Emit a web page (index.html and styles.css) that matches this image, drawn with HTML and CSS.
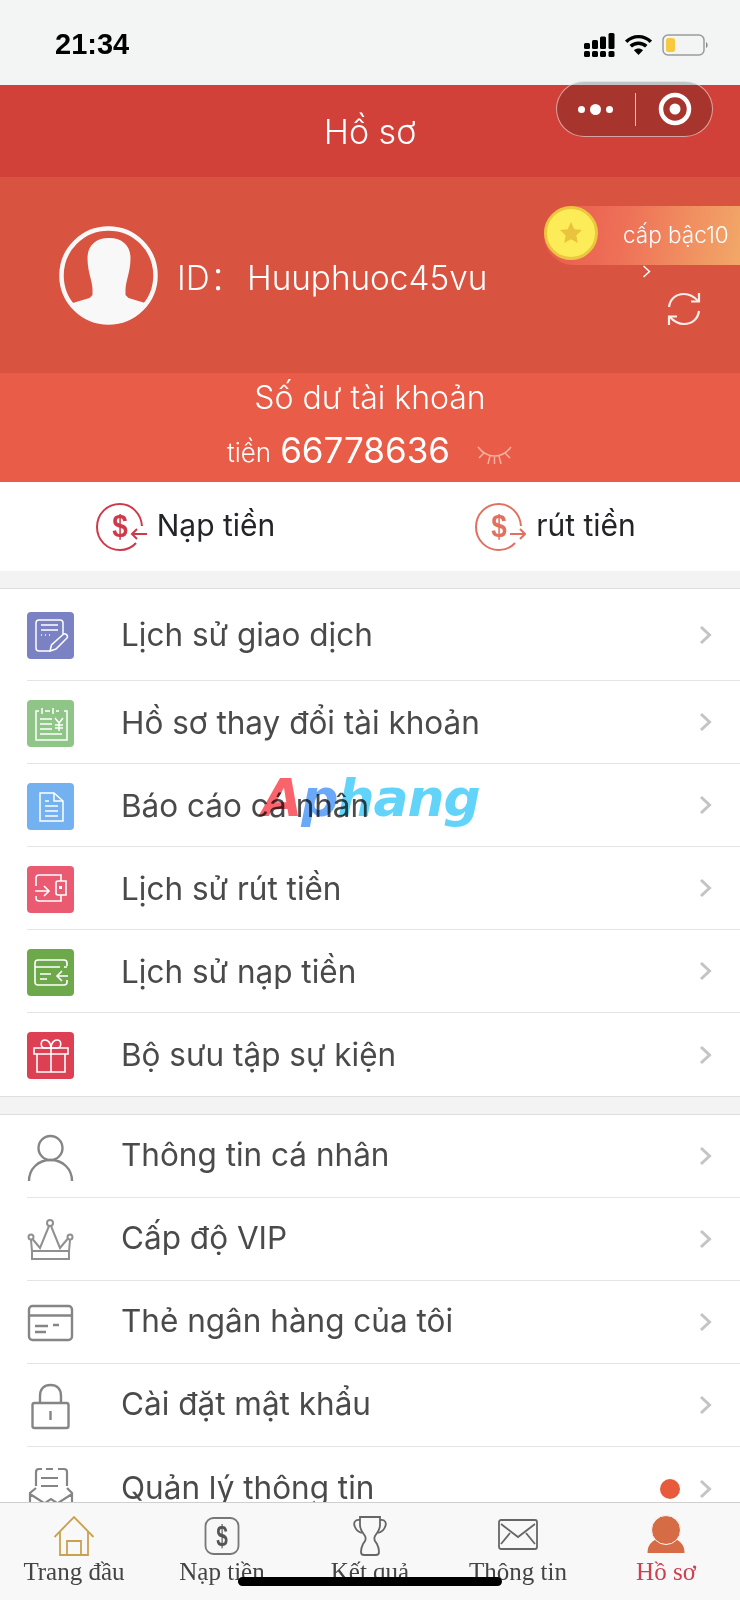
FILE: index.html
```html
<!DOCTYPE html>
<html lang="vi">
<head>
  <meta charset="UTF-8">
  <meta name="viewport" content="width=device-width, initial-scale=1.0">
  <title>Hồ sơ</title>
  <link rel="stylesheet" href="styles.css">
</head>
<body>
  <div class="statusbar">
    <span class="time">21:34</span>
    <div class="status-icons">
      <svg width="31" height="24" viewBox="0 0 31 24" fill="#000">
        <rect x="0" y="10" width="6" height="6" rx="1.500"/><rect x="0" y="18" width="6" height="6" rx="1.500"/>
        <rect x="8" y="7" width="6" height="9" rx="1.500"/><rect x="8" y="18" width="6" height="6" rx="1.500"/>
        <rect x="16" y="3.500" width="6" height="12.500" rx="1.500"/><rect x="16" y="18" width="6" height="6" rx="1.500"/>
        <rect x="24.500" y="0" width="6" height="16" rx="1.500"/><rect x="24.500" y="18" width="6" height="6" rx="1.500"/>
      </svg>
      <svg width="29" height="21" viewBox="0 0 30 23" fill="none" stroke="#000" stroke-width="3.800">
        <path d="M1.500 8.500C9 1 21 1 28.500 8.500"/>
        <path d="M6.500 13.500C11 9 19 9 23.500 13.500"/>
        <path d="M15 23l-5-5.200c2.800-2.400 7.200-2.400 10 0z" fill="#000" stroke="none"/>
      </svg>
      <svg class="battery" width="47" height="24" viewBox="0 0 47 24" fill="none">
        <rect x="1" y="2" width="41" height="20" rx="5" stroke="#9a9a9a" stroke-width="1.500"/>
        <rect x="4" y="5" width="9" height="14" rx="2.500" fill="#f7c93e"/>
        <path d="M44 9c2 .8 2.400 5.200 0 6z" fill="#8a8a8a"/>
      </svg>
    </div>
  </div>

  <div class="titlebar">Hồ sơ</div>

  <div class="capsule">
    <div class="capsule-dots"><i></i><i class="big"></i><i></i></div>
    <div class="capsule-line"></div>
    <svg width="34" height="34" viewBox="0 0 34 34" fill="none">
      <circle cx="17" cy="17" r="14" stroke="#fff" stroke-width="4.500"/>
      <circle cx="17" cy="17" r="5.500" fill="#fff"/>
    </svg>
  </div>

  <div class="profile">
    <svg class="avatar" width="99" height="99" viewBox="0 0 99 99" fill="none">
      <defs><clipPath id="avatar-clip"><circle cx="49.500" cy="49.500" r="47"/></clipPath></defs>
      <g clip-path="url(#avatar-clip)" fill="#f8f8f8">
        <path d="M49.500 12c-13 0-21 8-21 20 0 8 1.500 14 3 20 1 4 2 8 2 12v5l-3 3-30 9v20h99V81l-30-9-3-3v-5c0-4 1-8 2-12 1.500-6 3-12 3-20 0-12-8-20-21-20z"/>
      </g>
      <circle cx="49.500" cy="49.500" r="47" stroke="#f8f8f8" stroke-width="4.500"/>
    </svg>
    <div class="user-id"><span class="user-id-label">ID：</span><span>Huuphuoc45vu</span></div>

    <div class="level">
      <div class="coin">
        <svg width="24" height="24" viewBox="0 0 24 24"><path d="M12 1l3.300 7.200 7.700.9-5.700 5.300 1.500 7.700L12 18.300l-6.800 3.800 1.500-7.700L1 9.100l7.700-.9z" fill="#e9c33d"/></svg>
      </div>
      <span class="level-text">cấp bậc10</span>
    </div>
    <svg class="level-arrow" width="9" height="13" viewBox="0 0 9 13" fill="none" stroke="#fff" stroke-width="1.500"><path d="M1.500 1l6 5.500-6 5.500"/></svg>
    <svg class="refresh" width="36" height="36" viewBox="0 0 36 36" fill="none" stroke="#fbeeea" stroke-width="2.200">
      <path d="M3 16C4 8 10 3 18 3c6 0 10 2.500 14 7"/><path d="M33 2v8.500h-8"/>
      <path d="M33 20c-1 8-7 13-15 13-6 0-10-2.500-14-7"/><path d="M3 34v-8.500h8"/>
    </svg>
  </div>

  <div class="balance">
    <div class="balance-label">Số dư tài khoản</div>
    <div class="balance-amount">
      <span class="currency">tiền</span>
      <span class="amount">66778636</span>
      <svg class="eye" width="37" height="26" viewBox="0 0 37 26" fill="none" stroke="#f4b0a3" stroke-width="1.500">
        <path d="M2 6c9 12 24 12 33 0"/><path d="M8 12l-5 5M14 15l-2 8M23 15l2 8M29 12l5 5M18.500 16v7"/>
      </svg>
    </div>
  </div>

  <div class="actions">
    <div class="action">
      <svg width="52" height="50" viewBox="0 0 52 50" fill="none" stroke="#cf3a4a" stroke-width="2">
        <path d="M47 24C46 11 36 2 25 2 12 2 2 12 2 25s10 23 23 23c7 0 12-2.500 16-7"/>
        <path d="M52 32H37M42 27l-5 5 5 5"/>
        <text class="dollar" transform="translate(25 35) scale(.9 1)" text-anchor="middle" font-size="31" fill="#cf3a4a" stroke="none">$</text>
      </svg>
      <span>Nạp tiền</span>
    </div>
    <div class="action">
      <svg width="52" height="50" viewBox="0 0 52 50" fill="none" stroke="#e2705f" stroke-width="2">
        <path d="M47 24C46 11 36 2 25 2 12 2 2 12 2 25s10 23 23 23c7 0 12-2.500 16-7"/>
        <path d="M36 32h15M46 27l5 5-5 5"/>
        <text class="dollar" transform="translate(25 35) scale(.9 1)" text-anchor="middle" font-size="31" fill="#e2705f" stroke="none">$</text>
      </svg>
      <span>rút tiền</span>
    </div>
  </div>

  <div class="menu">
    <div class="group">
      <div class="row row-tall">
        <svg class="tile" width="47" height="47" viewBox="0 0 47 47" fill="none" stroke="#fff" stroke-width="1.500">
          <rect width="47" height="47" rx="4" fill="#7a82c4" stroke="none"/>
          <path d="M23 39H12a3 3 0 0 1-3-3V11a3 3 0 0 1 3-3h21a3 3 0 0 1 3 3v11"/>
          <path d="M14 13h17M14 18h17M14 23h1M18 23h1M22 23h1"/>
          <path d="M23 39l1.500-6L36 22.500c1.500-1.300 5-.5 4.500 3L29 37z"/>
        </svg>
        <span class="row-text">Lịch sử giao dịch</span>
        <svg class="chevron" width="13" height="20" viewBox="0 0 13 20" fill="none" stroke="#c4c4c4" stroke-width="3"><path d="M2 2l8.500 8L2 18"/></svg>
      </div>
      <div class="row">
        <svg class="tile" width="47" height="47" viewBox="0 0 47 47" fill="none" stroke="#fff" stroke-width="1.500">
          <rect width="47" height="47" rx="4" fill="#8fc587" stroke="none"/>
          <path d="M12 11H9v29h31V11h-3M18 11h5M29 11h3M15 8v6M26 8v6"/>
          <path d="M13 19h12M13 24h12M13 29h12M13 34h22"/>
          <path d="M28 18l4 5 4-5M32 23v8M28 25h8M28 28h8"/>
        </svg>
        <span class="row-text">Hồ sơ thay đổi tài khoản</span>
        <svg class="chevron" width="13" height="20" viewBox="0 0 13 20" fill="none" stroke="#c4c4c4" stroke-width="3"><path d="M2 2l8.500 8L2 18"/></svg>
      </div>
      <div class="row">
        <svg class="tile" width="47" height="47" viewBox="0 0 47 47" fill="none" stroke="#fff" stroke-width="1.500">
          <rect width="47" height="47" rx="4" fill="#74b1f1" stroke="none"/>
          <path d="M27 10H13v28h23V18z"/><path d="M27 10v8h9"/>
          <path d="M18 18h4M18 23h13M18 28h13M18 33h13"/>
        </svg>
        <span class="row-text">Báo cáo cá nhân</span>
        <svg class="chevron" width="13" height="20" viewBox="0 0 13 20" fill="none" stroke="#c4c4c4" stroke-width="3"><path d="M2 2l8.500 8L2 18"/></svg>
      </div>
      <div class="row">
        <svg class="tile" width="47" height="47" viewBox="0 0 47 47" fill="none" stroke="#fff" stroke-width="1.600">
          <rect width="47" height="47" rx="4" fill="#ea5b72" stroke="none"/>
          <path d="M9 20v-8a3 3 0 0 1 3-3h22v26H12a3 3 0 0 1-3-3v-2"/>
          <path d="M39 15H31a2 2 0 0 0-2 2v10a2 2 0 0 0 2 2h8z" fill="#ea5b72"/>
          <rect x="32" y="20" width="3" height="3" fill="#fff" stroke="none"/>
          <path d="M8 25h14M17 20l5 5-5 5"/>
        </svg>
        <span class="row-text">Lịch sử rút tiền</span>
        <svg class="chevron" width="13" height="20" viewBox="0 0 13 20" fill="none" stroke="#c4c4c4" stroke-width="3"><path d="M2 2l8.500 8L2 18"/></svg>
      </div>
      <div class="row">
        <svg class="tile" width="47" height="47" viewBox="0 0 47 47" fill="none" stroke="#fff" stroke-width="1.600">
          <rect width="47" height="47" rx="4" fill="#6da94a" stroke="none"/>
          <path d="M40 17v-3a3 3 0 0 0-3-3H11a3 3 0 0 0-3 3v19a3 3 0 0 0 3 3h26a3 3 0 0 0 3-3v-2"/>
          <path d="M8 18h25M37 18h3M13 25h11M13 30h7"/>
          <path d="M41 27H30M35 22l-5 5 5 5"/>
        </svg>
        <span class="row-text">Lịch sử nạp tiền</span>
        <svg class="chevron" width="13" height="20" viewBox="0 0 13 20" fill="none" stroke="#c4c4c4" stroke-width="3"><path d="M2 2l8.500 8L2 18"/></svg>
      </div>
      <div class="row row-last">
        <svg class="tile" width="47" height="47" viewBox="0 0 47 47" fill="none" stroke="#fff" stroke-width="1.600">
          <rect width="47" height="47" rx="4" fill="#dd4052" stroke="none"/>
          <path d="M7 16h34v6H7zM10 22v18h28V22M24 16v24"/>
          <path d="M24 16h-6c-5 0-5-8 0-8 3 0 6 3 6 8zM24 16h6c5 0 5-8 0-8-3 0-6 3-6 8z"/>
        </svg>
        <span class="row-text">Bộ sưu tập sự kiện</span>
        <svg class="chevron" width="13" height="20" viewBox="0 0 13 20" fill="none" stroke="#c4c4c4" stroke-width="3"><path d="M2 2l8.500 8L2 18"/></svg>
      </div>
    </div>

    <div class="group group-plain">
      <div class="row">
        <svg class="tile" width="47" height="47" viewBox="0 0 47 47" fill="none" stroke="#858585" stroke-width="2.400">
          <circle cx="23.500" cy="14" r="12"/>
          <path d="M2 47c0-12 9-21 21.500-21S45 35 45 47"/>
        </svg>
        <span class="row-text">Thông tin cá nhân</span>
        <svg class="chevron" width="13" height="20" viewBox="0 0 13 20" fill="none" stroke="#c4c4c4" stroke-width="3"><path d="M2 2l8.500 8L2 18"/></svg>
      </div>
      <div class="row">
        <svg class="tile" width="47" height="47" viewBox="0 0 47 47" fill="none" stroke="#909090" stroke-width="2">
          <circle cx="23" cy="6" r="3"/><circle cx="4" cy="20" r="2.500"/><circle cx="43" cy="20" r="2.500"/>
          <path d="M22 9L13 31 5.500 22M24 9l9 22 7.500-9"/>
          <path d="M4 23l1 11h37l1-11M5 34v8h37v-8"/>
        </svg>
        <span class="row-text">Cấp độ VIP</span>
        <svg class="chevron" width="13" height="20" viewBox="0 0 13 20" fill="none" stroke="#c4c4c4" stroke-width="3"><path d="M2 2l8.500 8L2 18"/></svg>
      </div>
      <div class="row">
        <svg class="tile" width="47" height="47" viewBox="0 0 47 47" fill="none" stroke="#858585" stroke-width="2.400">
          <rect x="2" y="6" width="43" height="34" rx="3.500"/>
          <path d="M2 15.500h43"/>
          <path d="M8 26h13M8 32h11M26 25h6"/>
        </svg>
        <span class="row-text">Thẻ ngân hàng của tôi</span>
        <svg class="chevron" width="13" height="20" viewBox="0 0 13 20" fill="none" stroke="#c4c4c4" stroke-width="3"><path d="M2 2l8.500 8L2 18"/></svg>
      </div>
      <div class="row">
        <svg class="tile" width="47" height="47" viewBox="0 0 47 47" fill="none" stroke="#858585" stroke-width="2.400">
          <path d="M13 20v-7C13 6 17 2 23.500 2S34 6 34 13v7"/>
          <rect x="5.500" y="20" width="36" height="25" rx="2"/>
          <path d="M23.500 28v9"/>
        </svg>
        <span class="row-text">Cài đặt mật khẩu</span>
        <svg class="chevron" width="13" height="20" viewBox="0 0 13 20" fill="none" stroke="#c4c4c4" stroke-width="3"><path d="M2 2l8.500 8L2 18"/></svg>
      </div>
      <div class="row row-last">
        <svg class="tile" width="47" height="47" viewBox="0 0 47 47" fill="none" stroke="#858585" stroke-width="2.200">
          <path d="M9 20V6a3 3 0 0 1 3-3h3M19 3h7M31 3h6a3 3 0 0 1 3 3v14"/>
          <path d="M14 12h17M14 20h17"/>
          <path d="M9 22l-6 5v18h42V27l-5-5M3 28l14 9M45 28l-14 9M6 45l18-12 18 12"/>
        </svg>
        <span class="row-text">Quản lý thông tin</span>
        <i class="dot"></i>
        <svg class="chevron" width="13" height="20" viewBox="0 0 13 20" fill="none" stroke="#c4c4c4" stroke-width="3"><path d="M2 2l8.500 8L2 18"/></svg>
      </div>
    </div>
  </div>

  <div class="watermark"><span class="wm-a">A</span><span class="wm-p">p</span><span class="wm-h">hang</span></div>

  <div class="tabbar">
    <div class="tab">
      <svg width="42" height="42" viewBox="0 0 42 42" fill="none" stroke="#c9a24f" stroke-width="1.800">
        <path d="M1.500 22L21 2l19.500 20"/><path d="M7 17v23h28V17"/><path d="M14 40V26h14v14"/>
      </svg>
      <span>Trang đầu</span>
    </div>
    <div class="tab">
      <svg width="42" height="42" viewBox="0 0 42 42" fill="none" stroke="#777" stroke-width="1.800">
        <rect x="4.500" y="3" width="33" height="36" rx="8"/>
        <text class="dollar" transform="translate(21 31) scale(.72 1)" text-anchor="middle" font-size="29" fill="#555" stroke="none">$</text>
      </svg>
      <span>Nạp tiền</span>
    </div>
    <div class="tab">
      <svg width="42" height="42" viewBox="0 0 42 42" fill="none" stroke="#666" stroke-width="1.800">
        <path d="M11 2h20v8c0 5-3 8-5 11-1 2-1 3 0 5l2 3c1 2 2 5 2 8 0 2-1 3-3 3H15c-2 0-3-1-3-3 0-3 1-6 2-8l2-3c1-2 1-3 0-5-2-3-5-6-5-11z"/>
        <path d="M11 5C6 4 4 8 6 12c1 3 4 5 7 6M31 5c5-1 7 3 5 7-1 3-4 5-7 6"/>
      </svg>
      <span>Kết quả</span>
    </div>
    <div class="tab">
      <svg width="42" height="42" viewBox="0 0 42 42" fill="none" stroke="#666" stroke-width="1.800">
        <rect x="2" y="5" width="38" height="29" rx="2"/>
        <path d="M4 9l17 13L38 9M4 29l9-11M38 29l-9-11"/>
      </svg>
      <span>Thông tin</span>
    </div>
    <div class="tab tab-active">
      <svg width="42" height="42" viewBox="0 0 42 42" fill="#d66c45">
        <path d="M2.500 38c0-7 3-11 9-14h19c6 3 9 7 9 14z"/>
        <circle cx="21" cy="15" r="14.500" stroke="#f8f8f8" stroke-width="1"/>
      </svg>
      <span>Hồ sơ</span>
    </div>
  </div>

  <div class="home-indicator"></div>
</body>
</html>
```

FILE: styles.css
```css
body {
  font-family: Inter, "Noto Sans CJK SC", sans-serif;
  margin: 0;
  width: 740px;
  height: 1600px;
  overflow: hidden;
  position: relative;
  display: flex;
  flex-direction: column;
  background: #f3f3f3;
}
svg {
  display: block;
  flex: none;
}
.dollar {
  font-family: "Liberation Sans", sans-serif;
  font-weight: 700;
}

.statusbar {
  height: 85px;
  flex: none;
  background: #f3f5f4;
  display: flex;
  align-items: center;
  justify-content: space-between;
  padding: 4px 31px 0 55px;
  box-sizing: border-box;
}
.time {
  font-family: "Liberation Sans", sans-serif;
  font-size: 29px;
  font-weight: 700;
  color: #000;
}
.status-icons {
  display: flex;
  align-items: center;
  gap: 9px;
}

.titlebar {
  height: 92px;
  flex: none;
  background: #d14139;
  color: #fff;
  font-size: 34px;
  font-weight: 300;
  display: flex;
  align-items: center;
  justify-content: center;
}

.capsule {
  position: absolute;
  left: 556px;
  top: 81px;
  width: 157px;
  height: 56px;
  box-sizing: border-box;
  border: 1.500px solid rgba(255, 255, 255, 0.55);
  border-radius: 28px;
  background: rgba(0, 0, 0, 0.2);
  display: flex;
  align-items: center;
  justify-content: center;
  gap: 22px;
}
.capsule-dots {
  display: flex;
  align-items: center;
  gap: 5px;
}
.capsule-dots i {
  width: 7px;
  height: 7px;
  border-radius: 50%;
  background: #fff;
}
.capsule-dots i.big {
  width: 11px;
  height: 11px;
}
.capsule-line {
  width: 1px;
  height: 33px;
  background: rgba(255, 255, 255, 0.7);
}

.profile {
  height: 196px;
  flex: none;
  position: relative;
  background: #d85340;
  display: flex;
  align-items: center;
  padding-left: 59px;
  box-sizing: border-box;
  gap: 19px;
}
.user-id {
  color: #fff;
  font-size: 33.300px;
  font-weight: 300;
  display: flex;
  align-items: baseline;
}
.user-id-label {
  width: 70px;
}
.level {
  position: absolute;
  left: 544px;
  right: 0;
  top: 29px;
  height: 59px;
  border-radius: 30px 0 0 30px;
  background: linear-gradient(100deg, #e85a4c 0%, #ee7057 40%, #f2a868 100%);
  display: flex;
  align-items: flex-start;
}
.coin {
  width: 54px;
  height: 54px;
  box-sizing: border-box;
  border: 3px solid #ecc63f;
  border-radius: 50%;
  background: #fcec58;
  display: flex;
  align-items: center;
  justify-content: center;
}
.level-text {
  color: #fff;
  font-size: 22.500px;
  font-weight: 300;
  margin-left: 25px;
  line-height: 58px;
  white-space: nowrap;
}
.level-arrow {
  position: absolute;
  left: 642px;
  top: 88px;
}
.refresh {
  position: absolute;
  left: 666px;
  top: 114px;
}

.balance {
  height: 109px;
  flex: none;
  background: #e95c47;
  color: #fff;
  display: flex;
  flex-direction: column;
  align-items: center;
  font-weight: 300;
}
.balance-label {
  font-size: 32px;
  line-height: 50px;
}
.balance-amount {
  display: flex;
  align-items: center;
  height: 54px;
}
.currency {
  font-size: 26px;
  margin-right: 9px;
  margin-top: 5px;
}
.amount {
  font-size: 35px;
  font-weight: 400;
}
.eye {
  margin: 8px 0 0 26px;
}

.actions {
  height: 89px;
  flex: none;
  background: #fff;
  display: grid;
  grid-template-columns: 1fr 1fr;
}
.action {
  display: flex;
  align-items: center;
  justify-content: center;
  gap: 10px;
  font-size: 30px;
  color: #232427;
}
.action span {
  margin-bottom: 4px;
}

.menu {
  flex: 1;
  min-height: 0;
  overflow: hidden;
  padding-top: 17px;
}
.group {
  background: #fff;
  border-top: 1px solid #dedede;
  border-bottom: 1px solid #dedede;
  margin-bottom: 17px;
}
.row {
  height: 83px;
  box-sizing: border-box;
  margin-left: 27px;
  padding-right: 28px;
  border-bottom: 1px solid #e4e4e4;
  display: flex;
  align-items: center;
}
.row-tall {
  height: 92px;
}
.row-last {
  border-bottom: none;
}
.tile {
  margin: 2px 47px 0 0;
}
.row-text {
  flex: 1;
  font-size: 31.500px;
  font-weight: 400;
  color: #4a4a4a;
  white-space: nowrap;
}
.group-plain .row-text {
  margin-bottom: 3px;
}
.dot {
  width: 20px;
  height: 20px;
  border-radius: 50%;
  background: #e75a3c;
  margin-right: 19px;
}

.watermark {
  position: absolute;
  left: 262px;
  top: 763px;
  font-family: "DejaVu Sans", sans-serif;
  font-size: 52px;
  font-weight: 700;
  font-style: italic;
  line-height: 70px;
  letter-spacing: -1px;
  mix-blend-mode: multiply;
  white-space: nowrap;
}
.wm-a { color: #f8636c; }
.wm-p { color: #6aa8f8; }
.wm-h { color: #62d4fa; }

.tabbar {
  height: 98px;
  flex: none;
  box-sizing: border-box;
  background: #f8f8f8;
  border-top: 1px solid #cfcfcf;
  display: grid;
  grid-template-columns: repeat(5, 1fr);
  position: relative;
}
.tab {
  display: flex;
  flex-direction: column;
  align-items: center;
  padding-top: 12px;
  font-family: "Liberation Serif", serif;
  font-size: 25px;
  color: #444;
}
.tab span {
  margin-top: 1px;
}
.tab-active {
  color: #cf3f50;
}

.home-indicator {
  position: absolute;
  left: 238px;
  top: 1577px;
  width: 264px;
  height: 9px;
  border-radius: 5px;
  background: #000;
}
```
